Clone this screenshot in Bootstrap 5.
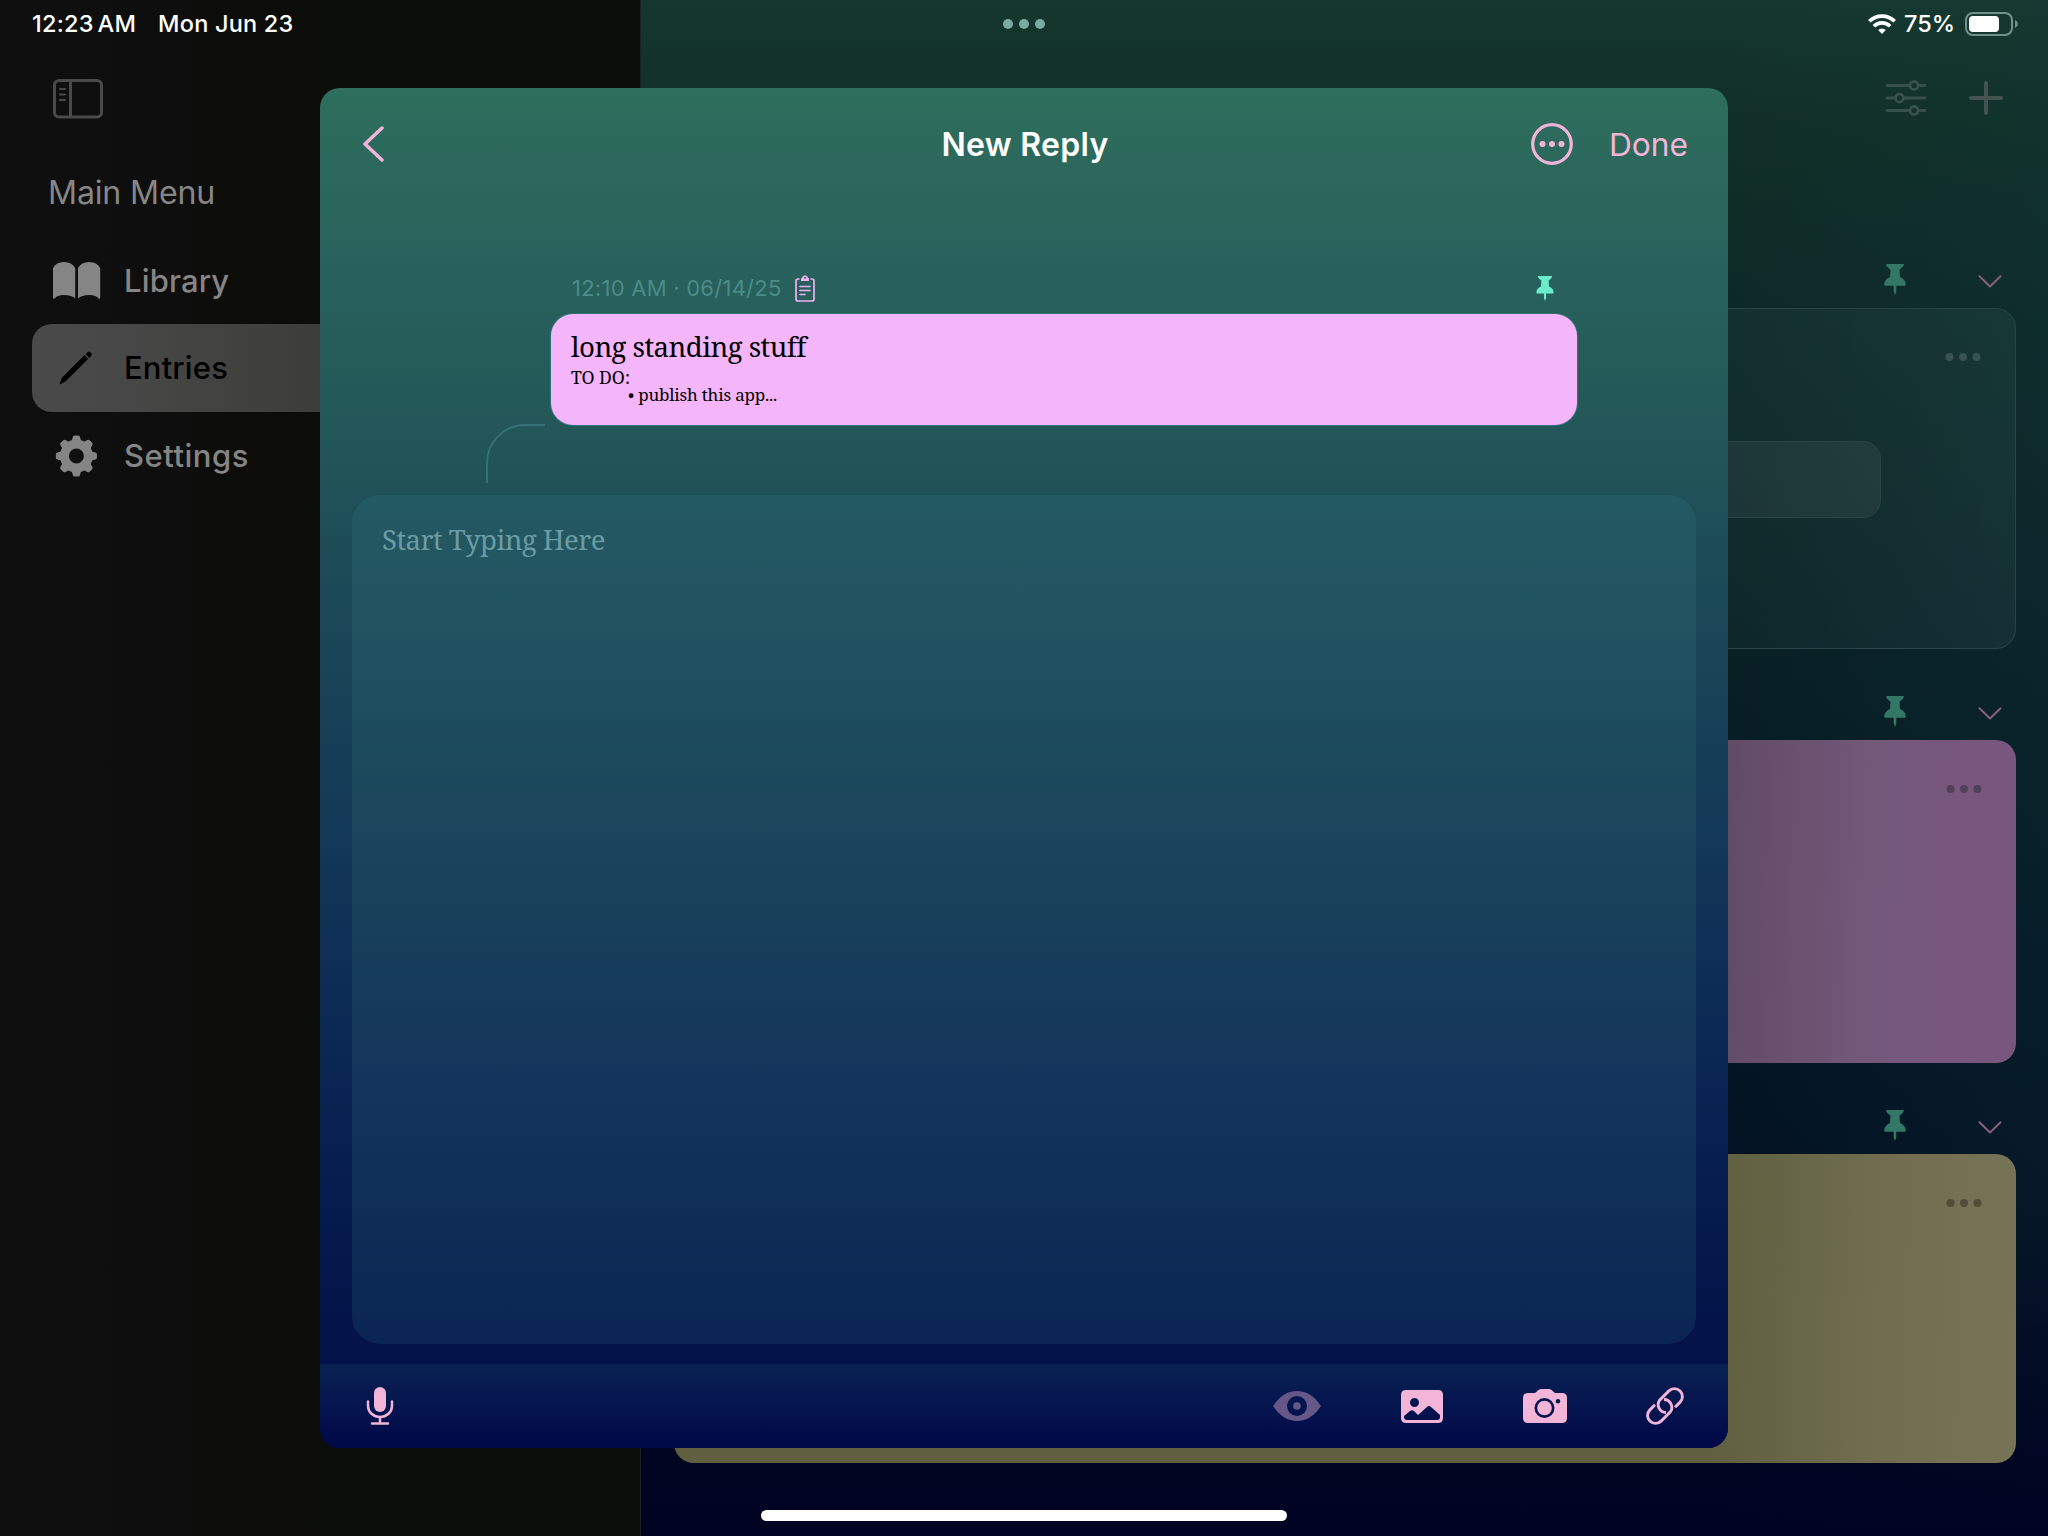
<!DOCTYPE html>
<html lang="en">
<head>
<meta charset="utf-8">
<meta name="viewport" content="width=device-width, initial-scale=1">
<title>New Reply</title>
<link href="https://cdn.jsdelivr.net/npm/bootstrap@5.3.0/dist/css/bootstrap.min.css" rel="stylesheet">
<style>
html,body{height:100%}
body{font-family:Inter,"Liberation Sans",sans-serif;background:#000;color:#fff;overflow:hidden}
svg{display:block;flex:none}
.screen{width:2048px;height:1536px}
.side{width:641px;background:linear-gradient(90deg,#0f0f0f 0,#0d0e0d 190px,#0c0d08 235px,#0b0d08 100%);border-right:1px solid #1b211d}
.side-head{height:132px;padding:0 0 13px 53px;color:#4a4a4a}
.side-title{height:104px;padding:18px 0 0 48px;font-size:32.2px;letter-spacing:-.2px;color:#868686}
.side-nav{padding-left:32px}
.side-item{height:88px;padding-left:20px;font-size:31px;font-weight:500;color:#858585;letter-spacing:.15px}
.side-item svg{width:50px;margin-right:22px}
.side-item.on{background:linear-gradient(90deg,#4a4a4a 0,#474747 100px,#3c3c37 300px);border-radius:20px 0 0 20px;color:#000}
.feed{background:linear-gradient(180deg,transparent 1200px,#000422 1536px),linear-gradient(90deg,transparent 1080px,rgba(22,66,76,.16)),linear-gradient(180deg,#15372d 0,#112f27 120px,#0d2927 300px,#092024 620px,#041723 960px,#020d20 1350px,#000422 1536px)}
.feed-tools{height:63px;padding-right:45px;margin:66px 0 132px}
.feed-body{padding:0 32px 0 33px}
.entry-head{height:91px;padding:0 14px 13px 0;color:#337866}
.entry-head svg + svg{color:#876079;margin:0 0 7px 72px}
.entry-card{border-radius:20px;padding:45px 34px 0 0}
.e1{height:341px;padding-top:44px;background:linear-gradient(90deg,rgba(190,255,235,.03) 1050px,rgba(190,255,245,.05));border:1px solid #294444;color:#3a5153}
.e2{height:323px;background:linear-gradient(92deg,#604a64 1040px,#73587a 1200px,#7a567e 100%);color:#50405a}
.e3{height:309px;background:linear-gradient(92deg,#605f40 1040px,#706d50 1210px,#777356 100%);color:#504d38}
.inner-box{height:77px;width:1079px;margin:80px 0 0 127px;border:1.5px solid #2a4442;border-radius:18px;background:linear-gradient(90deg,rgba(255,235,225,.055) 900px,rgba(255,255,255,.06))}
.statusbar{position:absolute;z-index:5;left:0;top:0;width:2048px;height:48px;padding:0 30px 0 32px;font-size:23.5px;font-weight:500;grid-template-columns:1fr auto 1fr}
.homebar{position:absolute;z-index:5;left:761px;top:1510px;width:526px;height:11px;border-radius:6px;background:#fff}
.sheet{position:absolute;z-index:3;left:320px;top:88px;width:1408px;height:1360px;border-radius:20px;overflow:hidden;background:linear-gradient(180deg,#2e6e5c 0,#29625c 170px,#245959 310px,#1f4f58 430px,#1a4557 560px,#133858 750px,#0b2854 950px,#04174b 1180px,#04114a 1280px,#000848 1360px)}
.sheet-bar{height:112px;padding:0 40px 0 42px;color:#f2b5d8;grid-template-columns:1fr auto 1fr}
.sheet-title{font-size:32px;font-weight:600;letter-spacing:.3px;padding-top:2px}
.done{font-size:31.7px;padding-top:2px}
.thread{padding:0 151px 0 231px;margin-top:68px}
.meta{height:46px;padding:0 23px 5px 21px;font-size:22px;color:#4b8c88;letter-spacing:.25px}
.quote,.editor{font-family:"Noto Serif","Liberation Serif",serif}
.quote{height:111px;border-radius:22px;background:#f4b5fa;color:#000;padding:15px 20px 0;box-shadow:0 0 0 1px #347376}
.q1{font-size:27.6px;line-height:34px;letter-spacing:-.55px}
.q2{font-size:17.6px;line-height:18px;margin-top:5px}
.q3{font-size:17px;line-height:18px;padding-left:57px;letter-spacing:-.2px}
.hook{margin-left:166px;height:70px;overflow:visible}
.editor{margin:0 32px;height:849px;border-radius:28px;background:linear-gradient(180deg,#245a63 0,#1f4f5f 190px,#1a435b 370px,#13345b 600px,#0a2553 849px);padding:24px 30px;font-size:27.5px;letter-spacing:-.53px;color:#6b9ca3}
.tools{height:84px;margin-top:20px;background:linear-gradient(180deg,#092152,#04124d 60%,#000848);padding:0 44px 0 46px;color:#f2b5d8}
</style>
</head>
<body>
<svg width="0" height="0" class="position-absolute">
<symbol id="pin" viewBox="0 0 22 31"><path d="M3 0h16q1.200 0 .8 1.300-.8 2.200-4.300 4.400l.5 7.300q5.300 2.200 5.800 7.200 0 1.600-1.400 1.600H1.600q-1.400 0-1.400-1.600.5-5 5.800-7.200l.5-7.300Q3 3.500 2.200 1.300 1.800 0 3 0zM9.700 21h2.600v6.500L11 31l-1.300-3.500z" fill="currentColor"/></symbol>
<symbol id="dots" viewBox="0 0 36 8"><g fill="currentColor"><circle cx="4.500" cy="4" r="4"/><circle cx="18" cy="4" r="4"/><circle cx="31.500" cy="4" r="4"/></g></symbol>
<symbol id="chev" viewBox="0 0 24 13"><path d="M1.500 1.300 12 11.500 22.500 1.300" fill="none" stroke="currentColor" stroke-width="2" stroke-linecap="round" stroke-linejoin="round"/></symbol>
</svg>
<div class="screen position-relative d-flex overflow-hidden">
  <header class="statusbar d-grid align-items-center">
    <div class="d-flex" style="letter-spacing:.2px"><span>12:23<span class="ms-1">AM</span></span><span style="margin-left:22px">Mon Jun 23</span></div>
    <svg width="42" height="10" viewBox="0 0 42 10" style="margin-right:2px"><g fill="#7aaaa0"><circle cx="5" cy="5" r="5"/><circle cx="21" cy="5" r="5"/><circle cx="37" cy="5" r="5"/></g></svg>
    <div class="d-flex align-items-center justify-content-end">
      <svg width="28" height="20" viewBox="0 0 28 20" class="me-2"><g fill="none" stroke="#fff" stroke-width="3.700"><path d="M1.300 7.300a18 18 0 0 1 25.400 0"/><path d="M5.900 12.200a11.500 11.500 0 0 1 16.200 0"/></g><path d="M14 20l-3.800-3.900a5.500 5.500 0 0 1 7.600 0z" fill="#fff"/></svg>
      <span>75%</span>
      <svg width="53" height="24" viewBox="0 0 53 24" style="margin-left:10px"><rect x="1" y="1" width="46" height="22" rx="7" fill="none" stroke="#71918a" stroke-width="2"/><rect x="4" y="4" width="30" height="16" rx="4" fill="#fff"/><path d="M50 8q3 1.500 3 4t-3 4z" fill="#71918a"/></svg>
    </div>
  </header>

  <aside class="side flex-shrink-0 d-flex flex-column">
    <div class="side-head d-flex align-items-end">
      <svg width="50" height="40" viewBox="0 0 50 40"><g fill="none" stroke="currentColor" stroke-width="3"><rect x="1.500" y="1.500" width="47" height="36.500" rx="4.500"/><path d="M17.500 2v36"/><path d="M7 10h5M7 15.500h5M7 21h5" stroke-width="2.200" stroke-linecap="round"/></g></svg>
    </div>
    <div class="side-title d-flex align-items-center">Main Menu</div>
    <nav class="side-nav">
      <div class="side-item d-flex align-items-center pt-1">
        <svg height="37" viewBox="0 0 50 37" style="margin-bottom:3px"><path d="M1 35.500V6Q4 0 12 0t11.200 6v30.500Q20 33 12 33 5 33 2.500 36.700 1 37 1 35.500zM48.200 35.500V6q-3-6-11-6T26 6v30.500q3.500-3.500 11.200-3.500 7 0 9.500 3.700 1.500.3 1.500-1.200z" fill="currentColor"/></svg><span style="margin-top:-2px">Library</span></div>
      <div class="side-item on d-flex align-items-center">
        <svg height="34" viewBox="0 0 50 34"><path d="M8 33l2.300-6.300L32.500 4.500l3.300 3.300L13.600 30zM34 3.200l1.800-1.700q1.400-1.200 2.900.3t.2 2.900L37.200 6.400z" fill="currentColor" stroke="currentColor" stroke-width=".8" stroke-linejoin="round"/></svg>Entries</div>
      <div class="side-item d-flex align-items-center" style="letter-spacing:.5px">
        <svg height="44" viewBox="0 0 50 44"><g fill="currentColor" transform="translate(-.6 0)"><path fill-rule="evenodd" d="M25 5.500a16.500 16.500 0 1 0 0 33 16.500 16.500 0 0 0 0-33zm0 9a7.500 7.500 0 1 1 0 15 7.500 7.500 0 0 1 0-15z"/><g id="tooth"><path d="M20 8l1.400-5q.3-1.500 1.800-1.500h3.600q1.500 0 1.800 1.500l1.400 5zM20 36l1.400 5q.3 1.500 1.800 1.500h3.600q1.500 0 1.800-1.500l1.400-5z"/></g><use href="#tooth" transform="rotate(45 25 22)"/><use href="#tooth" transform="rotate(90 25 22)"/><use href="#tooth" transform="rotate(135 25 22)"/></g></svg>Settings</div>
    </nav>
  </aside>

  <main class="feed flex-grow-1 d-flex flex-column">
    <div class="feed-tools d-flex align-items-center justify-content-end">
      <svg width="42" height="36" viewBox="0 0 42 36" style="color:#37504a;margin-right:42px"><g fill="none" stroke="currentColor" stroke-width="2.800" stroke-linecap="round"><path d="M2 5.500h22M34 5.500h6M2 18h7M19 18h21M2 30.500h22M34 30.500h6"/><circle cx="29" cy="5.500" r="4"/><circle cx="14.500" cy="18" r="4"/><circle cx="29" cy="30.500" r="4"/></g></svg>
      <svg width="34" height="34" viewBox="0 0 34 34"><path d="M17 2v30M2 17h30" stroke="#41544f" stroke-width="4" stroke-linecap="round"/></svg>
    </div>
    <div class="feed-body">
      <div class="entry-head d-flex align-items-end justify-content-end" style="height:47px">
        <svg width="22" height="31"><use href="#pin"/></svg><svg width="24" height="13"><use href="#chev"/></svg></div>
      <section class="entry-card e1"><svg class="ms-auto" width="36" height="8"><use href="#dots"/></svg><div class="inner-box"></div></section>
      <div class="entry-head d-flex align-items-end justify-content-end">
        <svg width="22" height="31"><use href="#pin"/></svg><svg width="24" height="13"><use href="#chev"/></svg></div>
      <section class="entry-card e2"><svg class="ms-auto" width="36" height="8"><use href="#dots"/></svg></section>
      <div class="entry-head d-flex align-items-end justify-content-end">
        <svg width="22" height="31"><use href="#pin"/></svg><svg width="24" height="13"><use href="#chev"/></svg></div>
      <section class="entry-card e3"><svg class="ms-auto" width="36" height="8"><use href="#dots"/></svg></section>
    </div>
  </main>

  <div class="sheet d-flex flex-column">
    <div class="sheet-bar d-grid align-items-center">
      <svg width="22" height="36" viewBox="0 0 22 36"><path d="M20 2 3 18 20 34" fill="none" stroke="currentColor" stroke-width="3.500" stroke-linecap="round" stroke-linejoin="round"/></svg>
      <span class="sheet-title text-white">New Reply</span>
      <div class="d-flex align-items-center justify-content-end">
        <svg width="42" height="42" viewBox="0 0 42 42" style="margin-right:36px"><circle cx="21" cy="21" r="19.300" fill="none" stroke="currentColor" stroke-width="3.200"/><g fill="currentColor"><circle cx="11.500" cy="21" r="3"/><circle cx="21" cy="21" r="3"/><circle cx="30.500" cy="21" r="3"/></g></svg>
        <span class="done">Done</span></div>
    </div>
    <div class="thread">
      <div class="meta d-flex align-items-center"><span>12:10 AM · 06/14/25</span>
        <svg width="20" height="27" viewBox="0 0 20 27" style="color:#f2b0f5;margin-left:13px"><path d="M4.500 4H3Q1 4 1 6v18q0 2 2 2h14q2 0 2-2V6q0-2-2-2h-1.500" fill="none" stroke="currentColor" stroke-width="1.700"/><path fill-rule="evenodd" d="M6 6V4q0-1 1-1.200Q7.500.2 10 .2T13 2.800q1 .2 1 1.200v2zm4-4.200a1 1 0 1 0 0 2 1 1 0 0 0 0-2z" fill="currentColor"/><path d="M5 11.500h10M5 15.500h10M5 19.500h5" stroke="currentColor" stroke-width="1.500" stroke-linecap="round"/></svg>
        <svg class="ms-auto" width="18" height="25" style="color:#6ceccb"><use href="#pin"/></svg>
      </div>
      <div class="quote"><div class="q1">long standing stuff</div><div class="q2">TO DO:</div><div class="q3">• publish this app...</div></div>
    </div>
    <svg class="hook" width="62" height="70" viewBox="0 0 62 70"><path d="M1 58V38A38 38 0 0 1 39 0H59" fill="none" stroke="#357175" stroke-width="2"/></svg>
    <div class="editor">Start Typing Here</div>
    <div class="tools d-flex align-items-center">
      <svg width="28" height="40" viewBox="0 0 28 40"><rect x="8" y="1" width="12" height="25" rx="6" fill="currentColor"/><path d="M2 15.500v4.500a12 11 0 0 0 24 0v-4.500M14 31v6M6 37.500h16" fill="none" stroke="currentColor" stroke-width="2.500" stroke-linecap="round"/></svg>
      <svg class="ms-auto" width="48" height="30" viewBox="0 0 48 30" style="color:#675789;margin-right:80px"><path fill-rule="evenodd" d="M0 15Q10 0 24 0t24 15Q38 30 24 30T0 15zM24 5a10 10 0 1 0 0 20 10 10 0 0 0 0-20z" fill="currentColor"/><circle cx="24" cy="15" r="3.800" fill="currentColor"/></svg>
      <svg width="42" height="33" viewBox="0 0 42 33" style="margin-right:80px"><path fill-rule="evenodd" d="M5 0h32q5 0 5 5v23q0 5-5 5H5q-5 0-5-5V5q0-5 5-5zm8.500 8a4.500 4.500 0 1 0 0 9 4.500 4.500 0 0 0 0-9zM3 27q0 3 3 3h30q3 0 3-3v-2L30 17q-2-2-4 0l-9 8-4-4q-2-1.500-4 0l-6 5z" fill="currentColor"/></svg>
      <svg width="44" height="34" viewBox="0 0 44 34" style="margin-right:79px"><path fill-rule="evenodd" d="M5 4h6q1.500 0 2.500-1.200Q15.500 0 18 0h8q2.500 0 4.500 2.800Q31.500 4 33 4h6q5 0 5 5v20q0 5-5 5H5q-5 0-5-5V9q0-5 5-5zm16.500 5a10 10 0 1 0 0 20 10 10 0 0 0 0-20zM35 10a2.300 2.300 0 1 0 0 4.600 2.300 2.300 0 0 0 0-4.600z" fill="currentColor"/><circle cx="21.500" cy="19" r="7.300" fill="currentColor"/></svg>
      <svg width="38" height="38" viewBox="0 0 38 38"><g fill="none" stroke="currentColor" stroke-width="2.900"><path id="chain" d="M29 20.200 34.100 15.100A7.900 7.900 0 0 0 22.900 3.900L13.400 13.400A7.900 7.900 0 0 0 20 25.500"/><use href="#chain" transform="rotate(180 19 19)"/></g></svg>
    </div>
  </div>
  <div class="homebar"></div>
</div>
<script src="https://cdn.jsdelivr.net/npm/bootstrap@5.3.0/dist/js/bootstrap.bundle.min.js"></script>
</body>
</html>
